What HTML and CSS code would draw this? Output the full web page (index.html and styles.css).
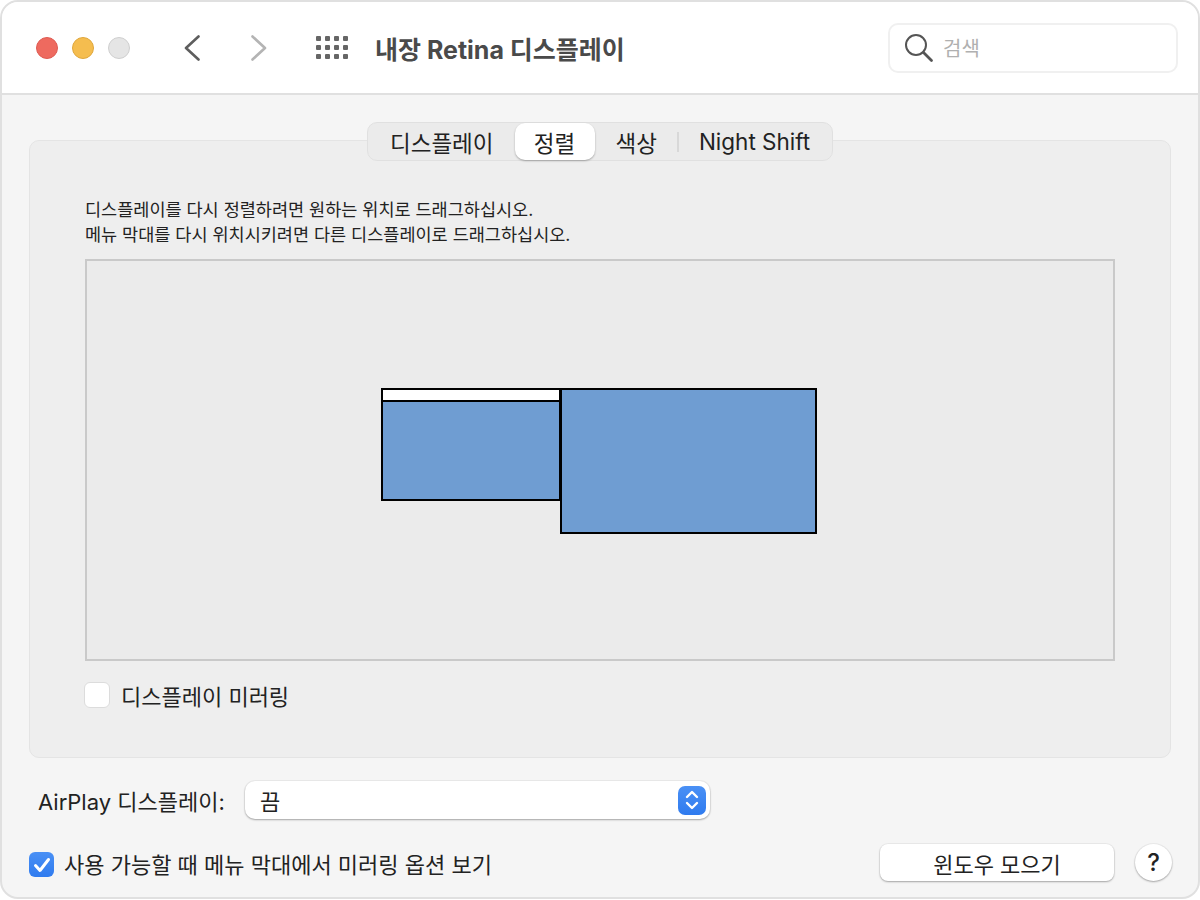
FILE: index.html
```html
<!DOCTYPE html>
<html lang="ko">
<head>
<meta charset="utf-8">
<title>내장 Retina 디스플레이</title>
<link rel="stylesheet" href="styles.css">
</head>
<body>
<div class="window">
  <header class="toolbar">
    <div class="lights">
      <span class="light red"></span>
      <span class="light yellow"></span>
      <span class="light grey"></span>
    </div>
    <svg class="chev back" width="16" height="26" viewBox="0 0 16 26"><path d="M14.5 1.5 2 13l12.5 11.5" fill="none" stroke="#5e5e5e" stroke-width="2.6" stroke-linecap="round" stroke-linejoin="round"/></svg>
    <svg class="chev fwd" width="16" height="26" viewBox="0 0 16 26"><path d="M1.5 1.5 14 13 1.5 24.5" fill="none" stroke="#b4b4b4" stroke-width="2.6" stroke-linecap="round" stroke-linejoin="round"/></svg>
    <svg class="grid" width="32" height="24" viewBox="0 0 32 24" fill="#666">
      <rect x="0" y="0" width="5" height="5" rx="1"/><rect x="9" y="0" width="5" height="5" rx="1"/><rect x="18" y="0" width="5" height="5" rx="1"/><rect x="27" y="0" width="5" height="5" rx="1"/>
      <rect x="0" y="9" width="5" height="5" rx="1"/><rect x="9" y="9" width="5" height="5" rx="1"/><rect x="18" y="9" width="5" height="5" rx="1"/><rect x="27" y="9" width="5" height="5" rx="1"/>
      <rect x="0" y="18" width="5" height="5" rx="1"/><rect x="9" y="18" width="5" height="5" rx="1"/><rect x="18" y="18" width="5" height="5" rx="1"/><rect x="27" y="18" width="5" height="5" rx="1"/>
    </svg>
    <h1 class="title">내장 Retina 디스플레이</h1>
    <div class="search">
      <svg width="30" height="30" viewBox="0 0 30 30"><circle cx="12" cy="12" r="10" fill="none" stroke="#555" stroke-width="2"/><path d="M19.5 19.5 27.5 27.5" stroke="#555" stroke-width="2.8" stroke-linecap="round"/></svg>
      <span class="placeholder">검색</span>
    </div>
  </header>
  <main class="content">
    <nav class="tabs">
      <span class="tab t1">디스플레이</span>
      <span class="tab active">정렬</span>
      <span class="tab t3">색상</span>
      <span class="sep"></span>
      <span class="tab t4">Night Shift</span>
    </nav>
    <section class="panel">
      <p class="hint">디스플레이를 다시 정렬하려면 원하는 위치로 드래그하십시오.<br>메뉴 막대를 다시 위치시키려면 다른 디스플레이로 드래그하십시오.</p>
      <div class="arrange">
        <div class="display d1"><div class="menubar"></div></div>
        <div class="display d2"></div>
      </div>
      <label class="mirror"><span class="box"></span>디스플레이 미러링</label>
    </section>
    <div class="airplay">
      <span class="ap-label">AirPlay 디스플레이:</span>
      <div class="select">
        <span>끔</span>
        <span class="stepper">
          <svg width="16" height="24" viewBox="0 0 16 24" fill="none" stroke="#fff" stroke-width="2.4" stroke-linecap="round" stroke-linejoin="round"><path d="M3 9 8 4l5 5"/><path d="M3 15l5 5 5-5"/></svg>
        </span>
      </div>
    </div>
    <div class="bottom">
      <span class="check">
        <svg width="18" height="16" viewBox="0 0 18 16" fill="none" stroke="#fff" stroke-width="3" stroke-linecap="round" stroke-linejoin="round"><path d="M2.5 8.5 7 13.5 15.5 2.5"/></svg>
      </span>
      <span class="check-label">사용 가능할 때 메뉴 막대에서 미러링 옵션 보기</span>
      <button class="gather">윈도우 모으기</button>
      <button class="help">?</button>
    </div>
  </main>
</div>
</body>
</html>
```
FILE: styles.css
```css
* { box-sizing: border-box; }
html, body { margin: 0; padding: 0; background: #fff; }
body {
  width: 1200px;
  height: 900px;
  font-family: "Inter", "Noto Sans CJK KR", sans-serif;
  color: #222;
}
.window {
  width: 1200px;
  height: 899px;
  border: 2px solid #e0e0e0;
  border-radius: 18px;
  overflow: hidden;
  background: #f5f5f5;
  display: flex;
  flex-direction: column;
}
.toolbar {
  height: 93px;
  flex: none;
  background: #fff;
  border-bottom: 2px solid #e0e0e0;
  display: flex;
  align-items: center;
  padding-left: 34px;
}
.lights { display: flex; gap: 14px; }
.light { width: 22px; height: 22px; border-radius: 50%; border: 1px solid; }
.red { background: #ee6a5f; border-color: #df5b52; }
.yellow { background: #f5bd4f; border-color: #e0a73b; }
.grey { background: #e5e5e5; border-color: #cfcfcf; }
.chev { flex: none; }
.back { margin-left: 54px; }
.fwd { margin-left: 51px; }
.grid { margin-left: 49px; flex: none; }
.title {
  margin: 0 0 0 27px;
  font-size: 25px;
  font-weight: 700;
  color: #4a4a4a;
  white-space: nowrap;
}
.search {
  margin-left: auto;
  margin-right: 20px;
  width: 290px;
  height: 50px;
  border: 2px solid #f0f0f0;
  border-radius: 10px;
  display: flex;
  align-items: center;
  padding-left: 14px;
  gap: 9px;
}
.placeholder { font-size: 20px; color: #b0b0b0; }
.content {
  flex: 1;
  padding: 27px 0 0 27px;
  display: flex;
  flex-direction: column;
  position: relative;
}
.tabs {
  align-self: center;
  margin-left: -27px;
  margin-bottom: -21px;
  position: relative;
  z-index: 1;
  width: 466px;
  height: 39px;
  background: #ebebeb;
  border: 1px solid #e0e0e0;
  border-radius: 10px;
  display: flex;
  align-items: center;
  font-size: 22.5px;
  color: #222;
}
.tab { white-space: nowrap; }
.t1 { margin-left: 22px; }
.active {
  margin-left: 21px;
  width: 80px;
  height: 37px;
  background: #fff;
  border-radius: 10px;
  box-shadow: 0 1px 2px rgba(0,0,0,.3);
  display: flex;
  align-items: center;
  justify-content: center;
}
.t3 { margin-left: 21px; }
.sep { width: 2px; height: 20px; margin-left: 20px; background: #d8d8d8; }
.t4 { margin-left: 20px; }
.panel {
  width: 1142px;
  height: 618px;
  background: #eee;
  border: 1px solid #e4e4e4;
  border-radius: 10px;
  padding: 56px 55px 0;
  flex: none;
}
.hint {
  margin: 0;
  font-size: 17.5px;
  line-height: 25px;
  color: #222;
  white-space: nowrap;
}
.arrange {
  margin-top: 12px;
  width: 1030px;
  height: 402px;
  background: #ebebeb;
  border: 2px solid #c9c9c9;
  position: relative;
}
.display {
  position: absolute;
  background: #6f9dd2;
  border: 2px solid #000;
}
.d1 { left: 294px; top: 127px; width: 180px; height: 113px; }
.d2 { left: 473px; top: 127px; width: 257px; height: 146px; }
.menubar { height: 10px; background: #fff; border-bottom: 2px solid #000; box-sizing: content-box; }
.mirror {
  display: flex;
  align-items: center;
  margin-top: 21px;
  height: 26px;
  font-size: 22px;
  color: #222;
}
.box {
  width: 26px;
  height: 26px;
  margin-left: -1px;
  margin-right: 11px;
  background: #fff;
  border: 1px solid #dcdcdc;
  border-radius: 6px;
}
.airplay {
  display: flex;
  align-items: center;
  margin-top: 23px;
  padding-left: 9px;
  height: 38px;
  flex: none;
}
.ap-label { font-size: 22px; width: 207px; white-space: nowrap; }
.select {
  width: 465px;
  height: 38px;
  background: #fff;
  border-radius: 10px;
  box-shadow: 0 1px 2px rgba(0,0,0,.3), 0 0 0 1px rgba(0,0,0,.04);
  display: flex;
  align-items: center;
  justify-content: space-between;
  padding: 0 4px 0 15px;
  font-size: 22px;
}
.stepper {
  width: 28px;
  height: 29px;
  border-radius: 7px;
  background: linear-gradient(#4a90f5, #2f7bef);
  display: flex;
  align-items: center;
  justify-content: center;
}
.bottom {
  display: flex;
  align-items: center;
  margin-top: 25px;
  height: 37px;
  flex: none;
}
.check {
  width: 25px;
  height: 25px;
  margin-top: 4px;
  border-radius: 6px;
  background: linear-gradient(#4a90f5, #2f7bef);
  display: flex;
  align-items: center;
  justify-content: center;
}
.check-label { margin-left: 10px; font-size: 22px; white-space: nowrap; }
button {
  font-family: inherit;
  color: #222;
  background: #fff;
  border: none;
  padding: 0;
  box-shadow: 0 1px 2px rgba(0,0,0,.3), 0 0 0 1px rgba(0,0,0,.04);
}
.gather {
  margin-left: auto;
  width: 234px;
  height: 37px;
  border-radius: 8px;
  font-size: 22px;
}
.help {
  margin-left: 21px;
  margin-right: 26px;
  width: 37px;
  height: 37px;
  border-radius: 50%;
  font-size: 24px;
  font-weight: 500;
}
```
